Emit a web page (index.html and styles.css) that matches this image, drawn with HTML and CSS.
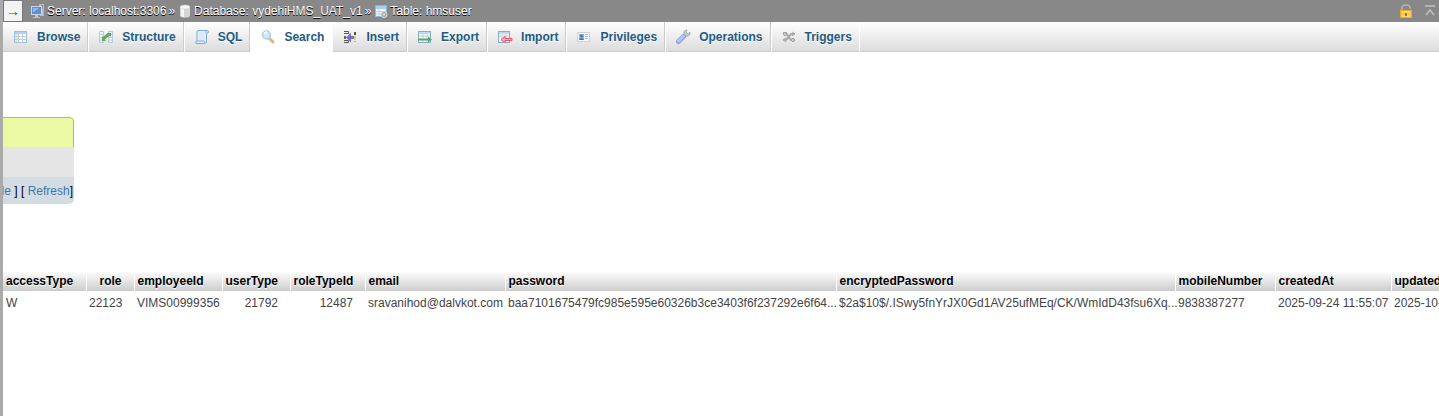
FILE: index.html
```html
<!DOCTYPE html>
<html lang="en">
	<head>
		<meta charset="UTF-8">
		<title>hmsuser</title>
		<link rel="stylesheet" href="styles.css">
	</head>
	<body>
		<div class="page">
			<header class="serverinfo">
				<button type="button" class="toggle" aria-label="Show panel">→</button>
				<nav class="crumbs">
					<a href="#"><svg class="icon" viewBox="0 0 16 16"><path d="M9 1h5v12h-4z" fill="#b9bdc2"/><path d="M11 3h2M11 5h2" stroke="#777"/><rect x="1.500" y="3.500" width="10" height="8" fill="#5d91d0" stroke="#c9d5e2"/><path d="M3 5h6l-5 4H3z" fill="#8fb8e8"/><path d="M5 12h3v2H5zM3 14h7v1H3z" fill="#bbc4cd"/></svg>Server: localhost:3306</a>
					<span>»</span>
					<a href="#"><svg class="icon" viewBox="0 0 16 16"><path d="M3 4v8.500c0 3 10 3 10 0V4z" fill="#d5d5d5"/><path d="M4 5v8q1 1 3 1V5z" fill="#f4f4f4"/><ellipse cx="8" cy="4" rx="5" ry="2" fill="#f7f7f7" stroke="#ccc" stroke-width=".5"/></svg>Database: vydehiHMS_UAT_v1</a>
					<span>»</span>
					<a href="#"><svg class="icon" viewBox="0 0 16 16"><rect x="2.500" y="2.500" width="11" height="11" fill="#f2f8ff" stroke="#8db5de"/><path d="M3 3h10v3H3z" fill="#a9cdf0"/><path d="M3 8.500h10M3 11h10M6 6v7" stroke="#bdd1e6"/><circle cx="11" cy="11.500" r="3" fill="#aaa" stroke="#ddd"/><circle cx="11" cy="11.500" r="1" fill="#eee"/></svg>Table: hmsuser</a>
				</nav>
				<div class="tools">
					<a href="#" aria-label="Unlock"><svg class="icon" viewBox="0 0 16 16"><path d="M4 8V5c0-4 8-4 8 0v1" fill="none" stroke="#b4b4b4" stroke-width="1.500"/><rect x="2.500" y="7.500" width="11" height="7" fill="#f7c54a" stroke="#eda927"/><path d="M4 9h8M4 13h8" stroke="#ffe6a0"/><rect x="7" y="10" width="2" height="3" fill="#a97716"/></svg></a>
					<a href="#" aria-label="Go to top"><svg class="icon" viewBox="0 0 16 16"><path d="M3 3h10M4 12l4-5 4 5" fill="none" stroke="#c0c0c0" stroke-width="1.500"/></svg></a>
				</div>
			</header>
			<nav class="tabs">
				<a href="#"><svg class="icon" viewBox="0 0 16 16"><rect x="1.500" y="2.500" width="12" height="11" fill="#fff" stroke="#a2bddb"/><path d="M2 3h11v2H2z" fill="#b6d0ee"/><path d="M2 5h3v8H2z" fill="#dcecc8"/><path d="M2 7.500h11M2 10.500h11M5.500 5v8M9.500 5v8" stroke="#bccfe3"/></svg>Browse</a>
				<a href="#"><svg class="icon" viewBox="0 0 16 16"><path d="M1.500 2.500h4v11h-4zM10.500 2.500h4v11h-4z" fill="#f2f7fc" stroke="#b1c7dd"/><path d="M1 5.500h5M1 8.500h5M1 11h5M10 5.500h5M10 8.500h5M10 11h5" stroke="#bdcfe0"/><path d="M5 10l6-5" fill="none" stroke="#65a55f" stroke-width="3"/><path d="M4 7v5h4zM9 4h4v4z" fill="#65a55f"/></svg>Structure</a>
				<a href="#"><svg class="icon" viewBox="0 0 16 16"><path d="M4 1.500h9q2 0 1.500 2l-2 1v9q-.5 1-2 1H2q-1-2 1-2.500V3q0-1 1-1.500z" fill="#e1f0ff" stroke="#7da9d7"/><path d="M3 12h7l1 2M12 4V2" fill="none" stroke="#7da9d7"/><path d="M5 4h5M5 6h5M5 8h5M5 10h4" stroke="#d0e4f8"/></svg>SQL</a>
				<a href="#" class="active"><svg class="icon" viewBox="0 0 16 16"><path d="M9 9l4 4" stroke="#dcb680" stroke-width="3" stroke-linecap="round"/><circle cx="6.500" cy="6" r="4" fill="#cfe5fa" stroke="#b3cde6" stroke-width="1.500"/><path d="M4 5q1-2 3-2" fill="none" stroke="#fff" stroke-width="1.500"/></svg>Search</a>
				<a href="#"><svg class="icon" viewBox="0 0 16 16"><path d="M2 2.500h4.500v2H2M2 11.500h4.500v2H2" fill="#eee" stroke="#555"/><path d="M2 7h2v3H2z" fill="#666"/><path d="M4 8.500l5-5v3.500h3v3H9v3.500z" fill="#756fca"/><path d="M12 3h2v3h-2z" fill="#555"/><path d="M12 7h2v4h-2z" fill="#f0cf62"/><path d="M12 12h2v1h-2z" fill="#d9b75b"/></svg>Insert</a>
				<a href="#"><svg class="icon" viewBox="0 0 16 16"><rect x="1.500" y="2.500" width="12" height="11" fill="#f7fbff" stroke="#87abd3"/><path d="M2 3h11v2H2z" fill="#c1d8ef"/><path d="M2 7h11M6 4v9M10 4v9" stroke="#bed1df"/><path d="M1 9.500h10V7.500l4 3-4 3v-2H1z" fill="#5da45c"/></svg>Export</a>
				<a href="#"><svg class="icon" viewBox="0 0 16 16"><rect x="1.500" y="2.500" width="11" height="11" fill="#f7fbff" stroke="#87abd3"/><path d="M2 3h10v2H2z" fill="#c1d8ef"/><path d="M2 7h10M5 4v9M9 4v9" stroke="#bed1df"/><path d="M15 9.500H8V7.500l-4 3 4 3v-2h7z" fill="#f2b5bd" stroke="#e45666"/></svg>Import</a>
				<a href="#"><svg class="icon" viewBox="0 0 16 16"><rect x="1.500" y="3.500" width="12" height="9" fill="#f4f8fc" stroke="#cbd4dd"/><path d="M3 5h5v6H3z" fill="#8cb6df"/><circle cx="5.500" cy="7" r="1.500" fill="#527699"/><path d="M3 11q2.500-4 5 0z" fill="#527699"/><path d="M9 5.500h3M9 7.500h3M9 9.500h3" stroke="#a8bed2"/></svg>Privileges</a>
				<a href="#"><svg class="icon" viewBox="0 0 16 16"><path d="M9 7l3-3" stroke="#a5a5a5" stroke-width="3"/><path d="M11 1q-3 1-2 4l2 2q3 1 4-2V3l-2 2-2-2 1-2z" fill="#ccc" stroke="#999" stroke-width=".7"/><path d="M3.500 12.500l5-5" stroke="#8ba5da" stroke-width="5" stroke-linecap="round"/><path d="M3.500 12l5-5" stroke="#b0c8f2" stroke-width="3" stroke-linecap="round"/></svg>Operations</a>
				<a href="#"><svg class="icon" viewBox="0 0 16 16"><path d="M2 4h3l5 7h4M2 11h3l5-6h4" fill="none" stroke="#aaa" stroke-width="2"/><circle cx="4" cy="5" r="1.500" fill="#ddd" stroke="#999"/><circle cx="12" cy="11" r="1.500" fill="#ddd" stroke="#999"/><path d="M11 3l3 2-3 2M5 9l-3 2 3 2" fill="none" stroke="#aaa"/></svg>Triggers</a>
			</nav>
			<main>
				<section class="query">
					<div class="success"></div>
					<div class="sql"></div>
					<div class="links"><span><a href="#">de</a> ] [ <a href="#">Refresh</a>]</span></div>
				</section>
				<table class="results">
					<colgroup>
						<col class="c-access"><col class="c-role"><col class="c-employee"><col class="c-user"><col class="c-roletype"><col class="c-email"><col class="c-password"><col class="c-encrypted"><col class="c-mobile"><col class="c-created"><col>
					</colgroup>
					<thead>
						<tr>
							<th>accessType</th>
							<th class="num">role</th>
							<th>employeeId</th>
							<th class="num">userType</th>
							<th class="num">roleTypeId</th>
							<th>email</th>
							<th>password</th>
							<th>encryptedPassword</th>
							<th>mobileNumber</th>
							<th>createdAt</th>
							<th>updated</th>
						</tr>
					</thead>
					<tbody>
						<tr>
							<td>W</td>
							<td class="num">22123</td>
							<td>VIMS00999356</td>
							<td class="num">21792</td>
							<td class="num">12487</td>
							<td>sravanihod@dalvkot.com</td>
							<td>baa7101675479fc985e595e60326b3ce3403f6f237292e6f64...</td>
							<td>$2a$10$/.ISwy5fnYrJX0Gd1AV25ufMEq/CK/WmIdD43fsu6Xq...</td>
							<td>9838387277</td>
							<td>2025-09-24 11:55:07</td>
							<td>2025-10-</td>
						</tr>
					</tbody>
				</table>
			</main>
		</div>
	</body>
</html>
```
FILE: styles.css
```css
*{
	box-sizing: border-box;
}
body{
	margin: 0;
	background: #fff;
	color: #444;
	font: 12px/16px "Liberation Sans", Arial, sans-serif;
}
a{
	color: #3b78a8;
	text-decoration: none;
}
.page{
	min-height: 100vh;
	border-left: 3px solid #aaa;
}
.icon{
	width: 16px;
	height: 16px;
	flex: none;
}

/* top bar */
.serverinfo{
	display: flex;
	align-items: center;
	height: 22px;
	background: #888;
}
.toggle{
	width: 20px;
	height: 22px;
	padding: 0;
	border: 1px solid #777;
	background: #f3f3f3;
	color: #444;
	font: 14px/16px "Liberation Sans", Arial, sans-serif;
}
.crumbs{
	display: flex;
	gap: 2px;
	padding-left: 7px;
	color: #fff;
	text-shadow: 0 1px 0 #000;
	white-space: nowrap;
}
.crumbs a{
	display: flex;
	gap: 1px;
	color: #fff;
}
.tools{
	display: flex;
	gap: 8px;
	margin-left: auto;
	padding-right: 1px;
}
.tools a{
	display: flex;
}

/* tabs */
.tabs{
	display: flex;
	height: 30px;
	border-bottom: 1px solid #ccc;
	background: linear-gradient(#fff, #dcdcdc);
}
.tabs a{
	display: flex;
	align-items: center;
	gap: 8px;
	height: 30px;
	padding: 0 7px 0 9px;
	border-left: 1px solid #fff;
	border-right: 1px solid #ccc;
	color: #235a81;
	font-weight: bold;
	text-shadow: 0 1px 0 #fff;
}
.tabs a:first-child{
	padding-left: 10px;
	border-left: 0;
}
.tabs a:last-child{
	border-right-color: #fff;
}
.tabs .active{
	background: #fff;
	border-right-color: #fff;
}

/* end of the scrolled query box */
.query{
	width: 71px;
	margin-top: 65px;
	overflow: hidden;
}
.success{
	height: 30px;
	border: 1px solid #a2c93a;
	border-width: 1px 1px 0 0;
	border-radius: 0 5px 0 0;
	background: #ebf8a4;
}
.sql{
	height: 30px;
	background: #e5e5e5;
}
.links{
	display: flex;
	justify-content: flex-end;
	height: 27px;
	padding: 6px 1px 0 0;
	border-radius: 0 0 5px 0;
	background: #d3dce3;
	color: #000;
	white-space: nowrap;
}

/* results */
main{
	overflow: hidden;
}
.results{
	width: 100%;
	margin-top: 67px;
	border-collapse: collapse;
	table-layout: fixed;
}
.results th, .results td{
	padding: 2px 3px;
	text-align: left;
	white-space: nowrap;
}
.results th{
	border-right: 1px solid #fff;
	background: linear-gradient(#fff, #ccc);
	color: #000;
	text-shadow: 0 1px 0 #fff;
}
.results th:last-child{
	border-right: 0;
}
.results td{
	padding-top: 4px;
}
.results .num{
	padding-right: 12px;
	text-align: right;
}
.c-access{width: 83px;}
.c-role{width: 48px;}
.c-employee{width: 88px;}
.c-user{width: 68px;}
.c-roletype{width: 75px;}
.c-email{width: 140px;}
.c-password{width: 331px;}
.c-encrypted{width: 339px;}
.c-mobile{width: 100px;}
.c-created{width: 116px;}
```
